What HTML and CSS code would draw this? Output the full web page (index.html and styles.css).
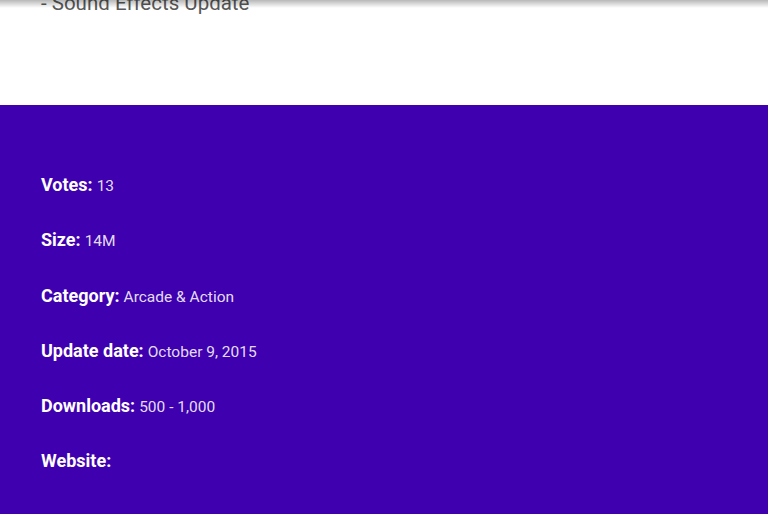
FILE: index.html
```html
<!DOCTYPE html>
<html lang="en">
<head>
  <meta charset="UTF-8">
  <title>App Details</title>
  <link rel="stylesheet" href="styles.css">
</head>
<body>

<div class="top-shadow"></div>

<div id="whats-new">
  <p class="change-line">- Sound Effects Update</p>
</div>

<div id="details">
  <div class="detail-row"><span class="label">Votes:</span> <span class="value">13</span></div>
  <div class="detail-row"><span class="label">Size:</span> <span class="value">14M</span></div>
  <div class="detail-row"><span class="label">Category:</span> <span class="value">Arcade &amp; Action</span></div>
  <div class="detail-row"><span class="label">Update date:</span> <span class="value">October 9, 2015</span></div>
  <div class="detail-row"><span class="label">Downloads:</span> <span class="value">500 - 1,000</span></div>
  <div class="detail-row"><span class="label">Website:</span></div>
</div>

</body>
</html>
```

FILE: styles.css
```css
body {
    margin: 0;
    padding: 0;
    font-family: Roboto, 'Noto Sans', sans-serif;
    background: #fff;
    height: 514px;
    overflow: hidden;
}

.top-shadow {
    position: fixed;
    top: 0;
    left: 0;
    right: 0;
    height: 8px;
    background: linear-gradient(to bottom, rgba(0, 0, 0, 0.28), rgba(0, 0, 0, 0));
}

#whats-new {
    display: flow-root;
    height: 105px;
    padding: 0 41px;
    box-sizing: border-box;
}

.change-line {
    margin: 0;
    margin-top: -11px;
    font-size: 20.5px;
    line-height: 28px;
    color: #595959;
}

#details {
    background: #3f00b0;
    height: 409px;
    box-sizing: border-box;
    padding: 69px 41px 0;
    display: flex;
    flex-direction: column;
    gap: 33.25px;
}

.detail-row {
    height: 22px;
    line-height: 22px;
    color: #fff;
}

.label {
    font-size: 18px;
    font-weight: 700;
}

.value {
    font-size: 15.5px;
    color: rgba(255, 255, 255, 0.87);
}
```
